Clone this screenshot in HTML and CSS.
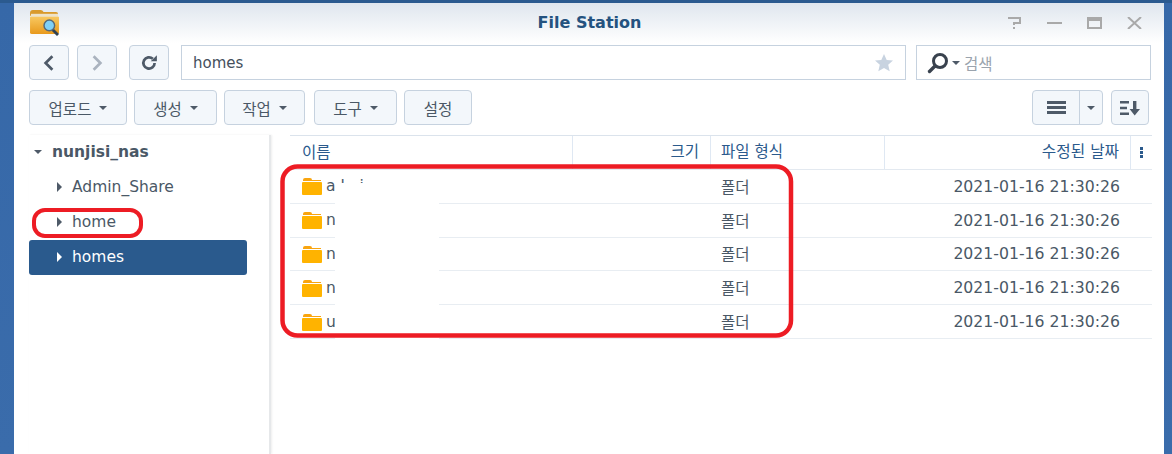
FILE: index.html
```html
<!DOCTYPE html>
<html lang="ko">
<head>
  <meta charset="UTF-8">
  <title>File Station</title>
  <link rel="stylesheet" href="styles.css">
</head>
<body>
  <div class="window">
    <div class="titlebar">
      <svg class="app-icon" viewBox="0 0 32 28">
        <defs>
          <linearGradient id="folderFill" x1="0" y1="0" x2="0" y2="1">
            <stop offset="0" stop-color="#f8c860"/>
            <stop offset="1" stop-color="#e8991c"/>
          </linearGradient>
        </defs>
        <path d="M1 4 q0-3 3-3 h8 q2 0 3 2 h13 q2 0 2 2 v2 H1z" fill="#d99a2b"/>
        <rect x="2" y="5" width="28" height="4" fill="#eee3c8"/>
        <path d="M1 8 h30 v16 q0 2-2 2 H3 q-2 0-2-2z" fill="url(#folderFill)"/>
        <path d="M24 21 l6 6" stroke="#2f4152" stroke-width="3"/>
        <circle cx="21" cy="17" r="5.5" fill="#7fd0f7" stroke="#54697a" stroke-width="1.5"/>
      </svg>
      <div class="title">File Station</div>
      <div class="win-controls">
        <svg viewBox="0 0 15 12"><path d="M1 1 h12 v5 H7 v2" fill="none" stroke="#a9a9a9" stroke-width="2"/><rect x="6" y="10" width="2" height="2" fill="#a9a9a9"/></svg>
        <svg viewBox="0 0 15 12"><rect x="0" y="5" width="15" height="2" fill="#a9a9a9"/></svg>
        <svg viewBox="0 0 15 12"><path d="M0 0 h15 v12 H0z M2 4 v6 h11 V4z" fill="#a9a9a9" fill-rule="evenodd"/></svg>
        <svg viewBox="0 0 15 12"><path d="M1 0 L14 12 M14 0 L1 12" stroke="#a9a9a9" stroke-width="2"/></svg>
      </div>
    </div>

    <div class="toolbar">
      <button class="btn nav"><svg viewBox="0 0 12 16"><path d="M9 2 L3 8 L9 14" fill="none" stroke="#4e5a68" stroke-width="2.4"/></svg></button>
      <button class="btn nav"><svg viewBox="0 0 12 16"><path d="M3 2 L9 8 L3 14" fill="none" stroke="#aab3bf" stroke-width="2.4"/></svg></button>
      <button class="btn nav refresh"><svg viewBox="0 0 16 16"><path d="M13 8 a5 5 0 1 1-1.6-3.7" fill="none" stroke="#4e5a68" stroke-width="2.4"/><path d="M9.5 6.5 h5.5 v-5.5z" fill="#4e5a68"/></svg></button>
      <div class="address">
        <span>homes</span>
        <svg viewBox="0 0 20 20"><path d="M10 1 l2.7 6 6.3.6-4.8 4.2 1.5 6.4L10 15l-5.7 3.2 1.5-6.4L1 7.6 7.3 7z" fill="#c8d3e0"/></svg>
      </div>
      <div class="search">
        <svg class="glass" viewBox="0 0 22 22"><circle cx="13" cy="9" r="6.5" fill="none" stroke="#39424e" stroke-width="3"/><path d="M8 14 L2.5 19.5" stroke="#39424e" stroke-width="3.4" stroke-linecap="round"/></svg>
        <i class="caret"></i>
        <span>검색</span>
      </div>
    </div>

    <div class="toolbar actions">
      <button class="btn wide upload">업로드 <i class="caret"></i></button>
      <button class="btn wide create">생성 <i class="caret"></i></button>
      <button class="btn wide task">작업 <i class="caret"></i></button>
      <button class="btn wide tools">도구 <i class="caret"></i></button>
      <button class="btn wide settings">설정</button>
      <div class="view-group">
        <button class="btn list-view">
          <span class="seg main"><svg viewBox="0 0 19 13"><path d="M0 0h19v3H0z M0 5h19v3H0z M0 10h19v3H0z" fill="#4e5a68"/></svg></span>
          <span class="seg"><i class="caret"></i></span>
        </button>
        <button class="btn sort"><svg viewBox="0 0 20 16"><path d="M0 1h9v2.4H0z M0 6.8h7v2.4H0z M0 12.6h9V15H0z M13 1h3.4v8H20l-5.3 6.5L9.6 9H13z" fill="#4e5a68"/></svg></button>
      </div>
    </div>

    <div class="main-area">
      <div class="sidebar">
        <div class="tree-root"><i class="caret"></i>nunjisi_nas</div>
        <div class="tree-item"><i class="arrow"></i>Admin_Share</div>
        <div class="tree-item"><i class="arrow"></i>home</div>
        <div class="tree-item selected"><i class="arrow"></i>homes</div>
      </div>

      <div class="files">
        <div class="file-row file-head">
          <div class="col-name">이름</div>
          <div class="col-size">크기</div>
          <div class="col-type">파일 형식</div>
          <div class="col-date">수정된 날짜</div>
          <div class="col-more"><svg viewBox="0 0 3 11"><path d="M0 0h3v3H0z M0 4h3v3H0z M0 8h3v3H0z" fill="#2b5a8c"/></svg></div>
        </div>
        <div class="file-row">
          <div class="col-name"><svg class="folder" viewBox="0 0 20 18"><path d="M1 3 q0-2 2-2 h5 q2 0 2 2 h9 v1 H1z" fill="#f9a50f"/><rect y="5" width="20" height="13" rx="1" fill="#ffb300"/></svg>a l&nbsp;&nbsp;&nbsp;i</div>
          <div class="col-size"></div>
          <div class="col-type">폴더</div>
          <div class="col-date">2021-01-16 21:30:26</div>
          <div class="col-more"></div>
        </div>
        <div class="file-row">
          <div class="col-name"><svg class="folder" viewBox="0 0 20 18"><path d="M1 3 q0-2 2-2 h5 q2 0 2 2 h9 v1 H1z" fill="#f9a50f"/><rect y="5" width="20" height="13" rx="1" fill="#ffb300"/></svg>n</div>
          <div class="col-size"></div>
          <div class="col-type">폴더</div>
          <div class="col-date">2021-01-16 21:30:26</div>
          <div class="col-more"></div>
        </div>
        <div class="file-row">
          <div class="col-name"><svg class="folder" viewBox="0 0 20 18"><path d="M1 3 q0-2 2-2 h5 q2 0 2 2 h9 v1 H1z" fill="#f9a50f"/><rect y="5" width="20" height="13" rx="1" fill="#ffb300"/></svg>n</div>
          <div class="col-size"></div>
          <div class="col-type">폴더</div>
          <div class="col-date">2021-01-16 21:30:26</div>
          <div class="col-more"></div>
        </div>
        <div class="file-row">
          <div class="col-name"><svg class="folder" viewBox="0 0 20 18"><path d="M1 3 q0-2 2-2 h5 q2 0 2 2 h9 v1 H1z" fill="#f9a50f"/><rect y="5" width="20" height="13" rx="1" fill="#ffb300"/></svg>n</div>
          <div class="col-size"></div>
          <div class="col-type">폴더</div>
          <div class="col-date">2021-01-16 21:30:26</div>
          <div class="col-more"></div>
        </div>
        <div class="file-row">
          <div class="col-name"><svg class="folder" viewBox="0 0 20 18"><path d="M1 3 q0-2 2-2 h5 q2 0 2 2 h9 v1 H1z" fill="#f9a50f"/><rect y="5" width="20" height="13" rx="1" fill="#ffb300"/></svg>u</div>
          <div class="col-size"></div>
          <div class="col-type">폴더</div>
          <div class="col-date">2021-01-16 21:30:26</div>
          <div class="col-more"></div>
        </div>
      </div>
    </div>
  </div>

  <!-- white patch and red marks drawn on top of the screenshot -->
  <div class="patch"></div>
  <svg class="marks" viewBox="0 0 1172 454">
    <rect x="34" y="210" width="107" height="26" rx="11" fill="none" stroke="#ed1c24" stroke-width="4"/>
    <rect x="282.5" y="166.5" width="508.5" height="169" rx="15" fill="none" stroke="#ed1c24" stroke-width="4.5"/>
  </svg>
</body>
</html>
```

FILE: styles.css
```css
* {
  margin: 0;
  padding: 0;
  box-sizing: border-box;
}

body {
  width: 1172px;
  height: 454px;
  overflow: hidden;
  position: relative;
  padding: 3px 8px 0 14px;
  background: linear-gradient(180deg, #2b5a8f 0, #2b5a8f 3px, #3668a8 3px, #3a6cab 100%);
  font-family: "DejaVu Sans", "Noto Sans CJK KR", sans-serif;
  font-size: 15.5px;
  color: #4a5866;
}

.window {
  width: 1150px;
  height: 451px;
  padding: 0 13px 0 15px;
  background: linear-gradient(180deg, #dfe6ee 0, #fff 40px);
}

.titlebar {
  display: flex;
  align-items: center;
  position: relative;
  height: 42px;
}

.app-icon {
  width: 31px;
  height: 27px;
  margin-top: -4px;
}

.title {
  position: absolute;
  left: 0;
  right: 0;
  top: 10px;
  text-align: center;
  padding-right: 1px;
  font-size: 16px;
  font-weight: bold;
  color: #24527f;
}

.win-controls {
  margin-left: auto;
  margin-right: 9px;
  margin-top: -2px;
  display: flex;
  gap: 25px;
}

.win-controls svg {
  width: 15px;
  height: 12px;
}

.toolbar {
  display: flex;
  height: 35px;
}

.actions {
  margin-top: 10px;
  gap: 7px;
}

.btn {
  display: flex;
  align-items: center;
  justify-content: center;
  height: 35px;
  background: #f3f7fb;
  border: 1px solid #c6d2df;
  border-radius: 4px;
  font-family: inherit;
  font-size: 15.5px;
  color: #4a5866;
}

.nav {
  width: 40px;
  margin-right: 8px;
}

.nav svg {
  width: 14px;
  height: 18px;
}

.refresh {
  margin-left: 4px;
  margin-right: 12px;
}

.refresh svg {
  width: 18px;
}

.address {
  display: flex;
  align-items: center;
  justify-content: space-between;
  width: 725px;
  padding: 0 11px;
  background: #fff;
  border: 1px solid #c6d2df;
  color: #444f5c;
  font-size: 15px;
}

.address svg {
  width: 20px;
  height: 20px;
}

.search {
  display: flex;
  align-items: center;
  width: 235px;
  margin-left: 10px;
  padding-left: 10px;
  background: #fff;
  border: 1px solid #c6d2df;
  color: #9aa3ad;
  font-size: 15.5px;
}

.glass {
  width: 22px;
  height: 22px;
  margin-right: 3px;
}

.search span {
  margin-left: 4px;
}

.caret {
  display: inline-block;
  width: 0;
  height: 0;
  border-left: 4px solid transparent;
  border-right: 4px solid transparent;
  border-top: 4px solid #4e5a68;
}

.btn .caret {
  margin-left: 8px;
}

.upload { width: 98px; }
.create { width: 83px; }
.task { width: 81px; }
.tools { width: 83px; margin-left: 2px; }
.settings { width: 68px; }

.view-group {
  display: flex;
  gap: 8px;
  margin-left: auto;
  margin-right: 2px;
}

.list-view {
  width: 71px;
}

.seg {
  display: flex;
  align-items: center;
  justify-content: center;
  flex: 1;
  height: 100%;
}

.seg .caret {
  margin-left: 0;
}

.seg.main {
  flex: none;
  width: 47px;
  border-right: 1px solid #c6d2df;
}

.seg svg {
  width: 19px;
  height: 13px;
}

.sort {
  width: 38px;
}

.sort svg {
  width: 20px;
  height: 16px;
}

.main-area {
  display: flex;
  margin-top: 10px;
  height: 319px;
}

.sidebar {
  width: 242px;
  flex: none;
  padding-right: 22px;
  border-right: 2px solid #e6e8ea;
  box-shadow: 1px 0 2px #eeeeee;
}

.tree-root {
  display: flex;
  align-items: center;
  height: 35px;
  padding-left: 5px;
  padding-bottom: 1px;
  font-weight: bold;
}

.tree-root .caret {
  margin-right: 10px;
}

.tree-item {
  display: flex;
  align-items: center;
  height: 35px;
  padding-left: 28px;
  padding-bottom: 2px;
}

.arrow {
  width: 0;
  height: 0;
  margin-right: 10px;
  margin-top: 1px;
  border-top: 5px solid transparent;
  border-bottom: 5px solid transparent;
  border-left: 5px solid #4e5a68;
}

.selected {
  background: #2a5a8d;
  border-radius: 3px;
  color: #fff;
}

.selected .arrow {
  border-left-color: #fff;
}

.files {
  flex: none;
  width: 862px;
  margin-left: 19px;
  border-top: 1px solid #dbe3ec;
}

.file-row {
  display: flex;
  align-items: center;
  height: 33.8px;
  border-bottom: 1px solid #e8edf2;
}

.file-head {
  height: 34px;
  color: #2b5a8c;
  border-bottom-color: #e3e9f0;
}

.file-head > div {
  height: 100%;
  line-height: 32px;
  border-right: 1px solid #dfe8f3;
}

.file-head .col-more {
  border-right: none;
}

.col-name {
  display: flex;
  align-items: center;
  flex: none;
  width: 283px;
  padding-left: 12px;
}

.col-size {
  flex: none;
  width: 138px;
  padding-right: 11px;
  text-align: right;
}

.col-type {
  flex: none;
  width: 174px;
  padding-left: 10px;
  padding-bottom: 1px;
}

.col-date {
  flex: none;
  width: 246px;
  padding-right: 11px;
  font-size: 15.7px;
  text-align: right;
}

.col-more {
  display: flex;
  align-items: center;
  justify-content: center;
  flex: none;
  width: 21px;
}

.col-more svg {
  width: 3px;
  height: 11px;
}

.folder {
  width: 20px;
  height: 18px;
  margin-right: 4px;
}

.patch {
  position: absolute;
  left: 335px;
  top: 183px;
  width: 104px;
  height: 156px;
  background: #fff;
}

.marks {
  position: absolute;
  left: 0;
  top: 0;
  width: 1172px;
  height: 454px;
}
```
